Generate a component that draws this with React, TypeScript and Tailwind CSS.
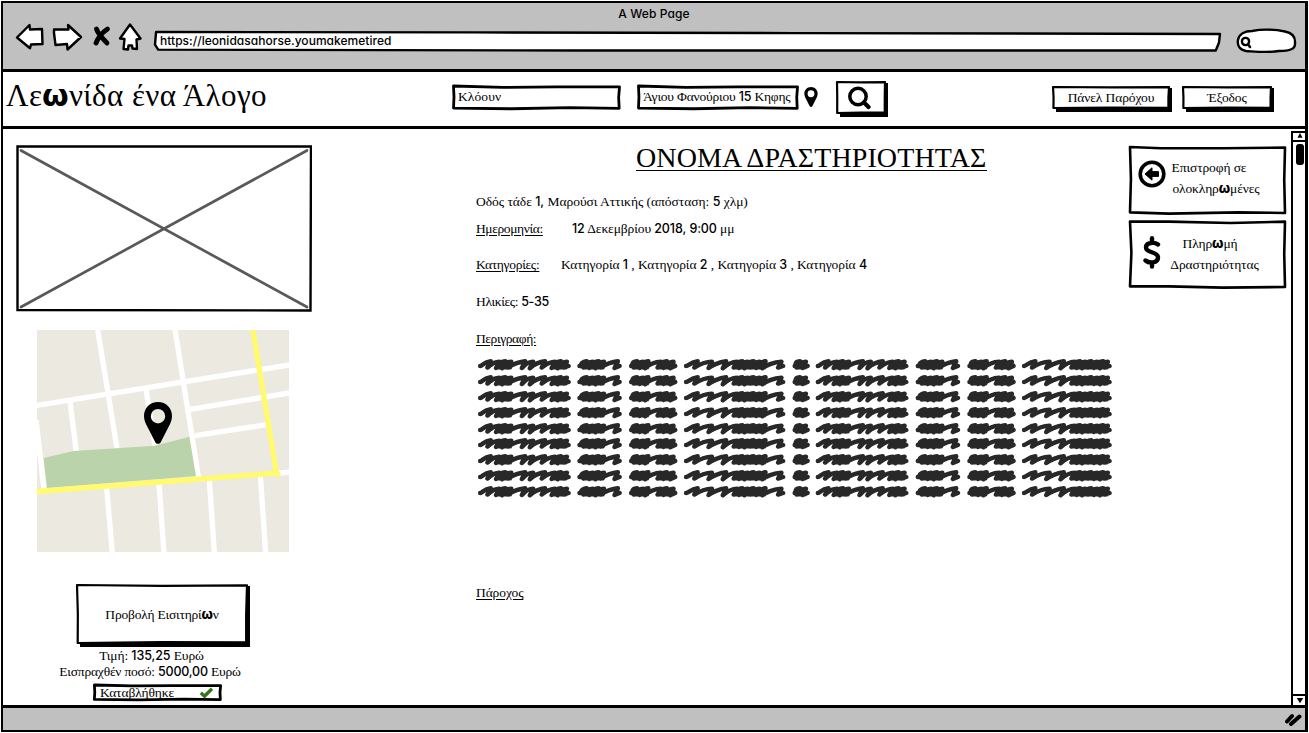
import React from "react";

/** Serif Greek text whose digits and omegas fall back to a sans face. */
function Tx({ children }: { children: string }) {
  return (
    <>
      {children.split(/(\d[\d:,\-]*|ω)/).map((part, i) => {
        if (part === "ω")
          return (
            <b key={i} className="font-['Inter',sans-serif] leading-none font-extrabold">
              ω
            </b>
          );
        if (/^\d/.test(part))
          return (
            <span key={i} className="font-['Inter',sans-serif] text-[12.5px] leading-none font-medium">
              {part}
            </span>
          );
        return <React.Fragment key={i}>{part}</React.Fragment>;
      })}
    </>
  );
}

/** Hand-drawn outline stretched behind its content. */
function Sketch({
  className = "",
  children,
  d = "M0.3 0 L30 6 L62 4 L99.7 4 L99.2 50 L99.5 97 L70 94 L35 99 L0.3 96 L0.6 48 Z",
  stroke = 2.8,
}: {
  className?: string;
  children?: React.ReactNode;
  d?: string;
  stroke?: number;
}) {
  return (
    <div className={"relative shrink-0 " + className}>
      <svg className="absolute inset-0 h-full w-full overflow-visible" viewBox="0 0 100 100" preserveAspectRatio="none" aria-hidden="true">
        <path d={d} fill="#fff" stroke="#000" strokeWidth={stroke} strokeLinejoin="round" vectorEffect="non-scaling-stroke" />
      </svg>
      <div className="relative h-full w-full">{children}</div>
    </div>
  );
}

function ShadowButton({ className = "", children }: { className?: string; children: React.ReactNode }) {
  return (
    <button className={"relative block shrink-0 " + className}>
      <span className="absolute -right-[2px] -bottom-[3px] left-[4px] h-[10px] bg-black" />
      <span className="absolute top-[2px] -right-[2px] -bottom-[2px] w-[8px] bg-black" />
      <svg className="absolute inset-[1px] h-[calc(100%-2px)] w-[calc(100%-2px)] overflow-visible" viewBox="0 0 100 100" preserveAspectRatio="none" aria-hidden="true">
        <path d="M0 0 L50 1.500 L100 0.500 L99.500 50 L99.500 99 L50 98.500 L0.400 100 L0.500 50 Z" fill="#fff" stroke="#000" strokeWidth="2.2" strokeLinejoin="round" vectorEffect="non-scaling-stroke" />
      </svg>
      <span className="relative flex h-full w-full items-center justify-center">{children}</span>
    </button>
  );
}

function Pin({ className }: { className: string }) {
  return (
    <svg viewBox="0 0 28 42" className={className}>
      <path
        fillRule="evenodd"
        d="M14 0C6 0 0 6 0 14C0 17 1 20 2.2 22.500L11.300 40.200C12.400 42.300 15.600 42.300 16.700 40.200L25.800 22.500C27 20 28 17 28 14C28 6 22 0 14 0ZM14 7A7.200 7.200 0 1 1 14 21.400A7.200 7.200 0 1 1 14 7Z"
      />
    </svg>
  );
}

function BrowserBar() {
  return (
    <div className="flex h-[69px] flex-col border-b-[3px] border-black bg-[#c0c0c0]">
      <div className="h-[20px] text-center font-['Inter',sans-serif] text-[12px] leading-[21px] font-medium tracking-[0.1px] [font-feature-settings:'cv11']">
        A Web Page
      </div>
      <div className="flex">
        <svg width="150" height="32" viewBox="3 23 150 32" className="shrink-0" fill="#fff" stroke="#000" strokeWidth="2.4" strokeLinejoin="round">
          <path d="M17 37.500L29.500 25L30 29.500L42 29L42.500 44L31 44.500L30 48.200Z" />
          <path d="M81 37L68 25L68.500 29.500L54 29.500L54 33L55.500 45L67 44L67.500 49.500Z" />
          <path d="M120 38.500L130 24.500L140.500 38.500L136.500 39.500L137 49L132.500 48.500L132 45.500L128.500 45.500L128 49.500L123.500 49L124.500 39Z" />
          <path d="M96.500 29C98 34 104 40 107 43M107.500 29C103 32 98 38 96 43" strokeWidth="4.800" strokeLinecap="round" />
        </svg>
        <Sketch
          className="mt-[9px] ml-[2px] h-[18px] w-[1065px]"
          d="M0.1 0 L30 2 L60 6 L100 11 L99.9 60 L99.6 103 L75 103 L40 103 L0.3 98 L0 70 Z"
          stroke={2.4}
        >
          <div className="pl-[5px] font-['Inter',sans-serif] text-[12px] leading-[17px] font-medium tracking-[0.03px] [font-feature-settings:'cv11']">
            https://leonidasahorse.youmakemetired
          </div>
        </Sketch>
        <svg width="62" height="28" viewBox="1236 27 62 28" className="mt-[4px] ml-[16px] shrink-0" fill="#fff" stroke="#000" strokeWidth="2.400" strokeLinejoin="round">
          <path d="M1238 40C1239 34 1245 31 1252 31C1262 29 1275 29.500 1285 31.500C1293 33 1295.500 37 1295 43C1295.500 49 1290 51 1279 51C1268 53 1255 51.500 1246 51C1240 50 1237 46 1238 40Z" />
          <circle cx="1245.500" cy="41.500" r="3.600" />
          <path d="M1248.500 45L1250 47" strokeWidth="2.600" strokeLinecap="round" />
        </svg>
      </div>
    </div>
  );
}

function Header() {
  return (
    <header className="flex h-[57px] border-b-[3px] border-black whitespace-nowrap">
      <h1 className="w-[450px] shrink-0 pl-[3px] text-[31px] leading-[47px] tracking-[0.4px]">
        <Tx>Λεωνίδα ένα Άλογο</Tx>
      </h1>
      <Sketch className="mt-[14px] h-[23px] w-[167px]">
        <div className="pl-[5px] leading-[22px] tracking-[0.1px]">Κλόουν</div>
      </Sketch>
      <Sketch className="mt-[14px] ml-[18px] h-[23px] w-[160px]">
        <div className="pl-[5px] leading-[22px] tracking-[-0.2px]">
          <Tx>Άγιου Φανούριου 15 Κηφης</Tx>
        </div>
      </Sketch>
      <Pin className="mt-[15px] ml-[6px] h-[20px] w-[14px]" />
      <ShadowButton className="mt-[9px] ml-[18px] h-[33px] w-[50px]">
        <svg width="24" height="24" viewBox="0 0 24 24" fill="none" stroke="#000" className="-ml-[5px]">
          <circle cx="11" cy="10.500" r="8.200" strokeWidth="3.500" />
          <path d="M17 16.500L21.500 21" strokeWidth="4.200" strokeLinecap="round" />
        </svg>
      </ShadowButton>
      <ShadowButton className="mt-[14px] ml-[166px] h-[23px] w-[118px]">
        <span className="pt-[2px]">Πάνελ Παρόχου</span>
      </ShadowButton>
      <ShadowButton className="mt-[14px] ml-[12px] h-[23px] w-[90px]">
        <span className="pt-[2px]">Έξοδος</span>
      </ShadowButton>
    </header>
  );
}

function StreetMap() {
  return (
    <div className="relative mt-[18px] ml-[34px] h-[222px] w-[252px]">
      <svg width="252" height="222" viewBox="51 30 756 666">
        <rect x="51" y="30" width="756" height="666" fill="#ece9e1" />
        <g stroke="#fff" strokeWidth="16" fill="none">
          <path d="M40 258L820 133M232 22L291 386M464 22L536 475M510 268L820 217M525 347L740 314M150 245L169 395M378 208L405 378M48 300L72 508M770 460L820 455M260 505L277 700M417 490L432 700M568 480L583 700M721 465L737 700" />
        </g>
        <path d="M71 414L160 393L290 385L405 377L508 350L528 468L81 504Z" fill="#bbd3ab" />
        <path d="M45 515L770 459L779 467M697 20L770 463" stroke="#fffa6e" strokeWidth="16" fill="none" />
      </svg>
      <Pin className="absolute top-[72px] left-[107px] h-[42px] w-[28px]" />
    </div>
  );
}

function LeftColumn() {
  return (
    <aside className="w-[470px] shrink-0 pt-[16px]">
      <svg width="296" height="167" viewBox="16 145 296 167" className="ml-[13px] block">
        <path d="M17.500 146.500L311 146.500L310.500 310.500L17.500 310Z" fill="#fff" stroke="#000" strokeWidth="2.400" />
        <path d="M21 150.500L307 307M307 150.500L21 307" stroke="#595959" strokeWidth="2.700" strokeLinecap="round" />
      </svg>
      <StreetMap />
      <ShadowButton className="mt-[32px] ml-[73px] h-[60px] w-[172px]">
        <span className="pt-[2px] tracking-[-0.2px]">
          <Tx>Προβολή Εισιτηρίων</Tx>
        </span>
      </ShadowButton>
      <div className="mt-[4px] w-[294px] text-center leading-[16px]">
        <p className="h-[16px] pl-[3px]">
          <Tx>Τιμή: 135,25 Ευρώ</Tx>
        </p>
        <p className="h-[16px] tracking-[-0.2px]">
          <Tx>Εισπραχθέν ποσό: 5000,00 Ευρώ</Tx>
        </p>
      </div>
      <Sketch className="mt-[5px] ml-[91px] h-[15px] w-[127px]">
        <div className="flex items-center justify-between pr-[7px] pl-[6px] leading-[15px]">
          Καταβλήθηκε
          <svg width="15" height="12" viewBox="0 0 15 12">
            <path d="M1.800 5.800L5.500 9.200L13 1.800" fill="none" stroke="#35751c" strokeWidth="3.400" />
          </svg>
        </div>
      </Sketch>
    </aside>
  );
}

/* Each word: start x followed by the x of every upstroke's top. */
const WORDS: number[][] = [
  [40, 72, 98, 116, 134, 176, 200, 236, 266, 284, 302],
  [340, 362, 380, 398, 414, 456],
  [496, 514, 532, 548, 586, 604, 624],
  [662, 697, 740, 783, 816, 832, 848, 866, 884, 902, 950],
  [990, 1006, 1024],
  [1060, 1092, 1118, 1136, 1154, 1196, 1220, 1256, 1286, 1304, 1322],
  [1362, 1384, 1402, 1420, 1436, 1478],
  [1518, 1536, 1554, 1570, 1608, 1626, 1646],
  [1683, 1717, 1760, 1803, 1836, 1852, 1868, 1886, 1904, 1922, 1936],
];

function wordPath(word: number[]) {
  const [start, ...tops] = word;
  let path = `M${start} 48`;
  let left = start;
  tops.forEach((x, i) => {
    const low = 53 + (i % 3);
    path += `C${left + 8} ${48} ${x - 22} ${36} ${x} ${34 + (i % 2)}L${x - 10} ${low}`;
    left = x - 10;
  });
  const end = tops[tops.length - 1];
  path += `L${end + 5} 48`;
  /* Ink pools where the strokes sit close together. */
  tops.forEach((x, i) => {
    if (i > 0 && x - tops[i - 1] <= 20) path += `M${tops[i - 1] - 4} 40L${x - 2} 41L${x - 4} 52L${tops[i - 1] - 6} 52`;
  });
  return path;
}

function Scribble() {
  return (
    <svg width="638" height="16" viewBox="34 21 1914 48" className="block h-[15.9px]">
      <path d={WORDS.map(wordPath).join("")} fill="none" stroke="#282828" strokeWidth="13.500" strokeLinecap="round" strokeLinejoin="round" />
    </svg>
  );
}

function Details() {
  return (
    <main className="w-[656px] shrink-0 pl-[3px] leading-[16px] whitespace-nowrap">
      <h2 className="mt-[14px] ml-[160px] h-[28px] w-[351px] border-b border-black text-[28px] leading-[30px] tracking-[0.1px]">
        ΟΝΟΜΑ ΔΡΑΣΤΗΡΙΟΤΗΤΑΣ
      </h2>
      <p className="mt-[23px] h-[16px] tracking-[-0.03px]">
        <Tx>Οδός τάδε 1, Μαρούσι Αττικής (απόσταση: 5 χλμ)</Tx>
      </p>
      <p className="mt-[11px] flex h-[16px]">
        <u className="w-[96px] tracking-[-0.38px] underline-offset-2">Ημερομηνία:</u>
        <span>
          <Tx>12 Δεκεμβρίου 2018, 9:00 μμ</Tx>
        </span>
      </p>
      <p className="mt-[20px] flex h-[16px]">
        <u className="w-[85px] tracking-[-0.3px] underline-offset-2">Κατηγορίες:</u>
        <span className="tracking-[-0.05px]">
          <Tx>Κατηγορία 1 , Κατηγορία 2 , Κατηγορία 3 , Κατηγορία 4</Tx>
        </span>
      </p>
      <p className="mt-[21px] h-[16px] tracking-[-0.35px]">
        <Tx>Ηλικίες: 5-35</Tx>
      </p>
      <p className="mt-[21px] h-[16px]">
        <u className="tracking-[-0.4px] underline-offset-2">Περιγραφή:</u>
      </p>
      <div className="mt-[10px]">
        {Array.from({ length: 9 }, (_, i) => (
          <Scribble key={i} />
        ))}
      </div>
      <p className="mt-[85px]">
        <u className="underline-offset-2">Πάροχος</u>
      </p>
    </main>
  );
}

function Actions() {
  return (
    <nav className="w-[162px] shrink-0 pt-[18px] pl-[1px] text-center leading-[21px]">
      <Sketch className="h-[66px] w-[155px]" d="M0 0 L20 2 L60 2 L100 1 L99.500 50 L100 100 L70 99 L25 101 L0 99 L0.600 48 Z" stroke={2.6}>
        <div className="flex pt-[10px] pl-[8px]">
          <svg width="28" height="28" viewBox="0 0 28 28" className="mt-[3px] shrink-0">
            <circle cx="14" cy="14" r="11.800" fill="none" stroke="#000" strokeWidth="3.600" />
            <path d="M7 14L14 7.800V11.600H20.500V16.400H14V20.200Z" stroke="#000" strokeLinejoin="round" />
          </svg>
          <p className="w-[100px]">
            <span className="-ml-[14px]">Επιστροφή σε</span>
            <br />
            <Tx>ολοκληρωμένες</Tx>
          </p>
        </div>
      </Sketch>
      <Sketch className="mt-[8px] h-[66px] w-[155px]" d="M0 1 L25 1 L65 3 L100 1 L99.500 50 L100 100 L60 101 L25 99 L0 99 L0.900 48 Z" stroke={2.6}>
        <div className="flex pt-[12px] pl-[13px]">
          <svg width="18" height="33" viewBox="0 0 18 33" className="mt-[3px] shrink-0" fill="none" stroke="#000" strokeWidth="4.4" strokeLinecap="round">
            <path d="M15 8.500C12.500 6.500 3 5.500 3 11.500C3 17.500 15 15 15 21.500C15 27.500 6 27.500 2.500 24.500M9 2.200V5M9 28V30.500" />
          </svg>
          <p className="ml-[5px] w-[100px]">
            <span className="-ml-[12px]">
              <Tx>Πληρωμή</Tx>
            </span>
            <br />
            <span className="-ml-[3px]">Δραστηριότητας</span>
          </p>
        </div>
      </Sketch>
    </nav>
  );
}

function ScrollBar() {
  return (
    <div className="mt-[2px] flex flex-1 flex-col items-center border-l-2 border-black">
      <svg width="14" height="11" viewBox="0 0 14 11" className="border-t-2 border-b-2 border-black">
        <path d="M7 0L11 7.500H3Z" />
      </svg>
      <div className="mt-[2px] h-[21px] w-[8px] rounded-[3px] bg-black" />
      <div className="flex-1" />
      <svg width="14" height="11" viewBox="0 0 14 11" className="border-t-2 border-black">
        <path d="M3 2.500H11L7 9Z" />
      </svg>
    </div>
  );
}

export default function App() {
  return (
    <div className="h-[733px] w-[1309px] overflow-hidden bg-white p-px font-['Liberation_Serif',serif] text-[13.5px] tracking-[-0.1px] text-black">
      <div className="flex h-[731px] w-[1307px] flex-col border-2 border-r-[3px] border-black">
        <BrowserBar />
        <Header />
        <div className="flex h-[576px]">
          <LeftColumn />
          <Details />
          <Actions />
          <ScrollBar />
        </div>
        <footer className="flex flex-1 items-center justify-end border-t-[3px] border-black bg-[#c0c0c0] pr-[3px]">
          <svg width="18" height="14" viewBox="0 0 18 14" stroke="#000" strokeWidth="4" strokeLinecap="round">
            <path d="M3 9.500L8 4M7 12L15.500 4.500" />
          </svg>
        </footer>
      </div>
    </div>
  );
}
